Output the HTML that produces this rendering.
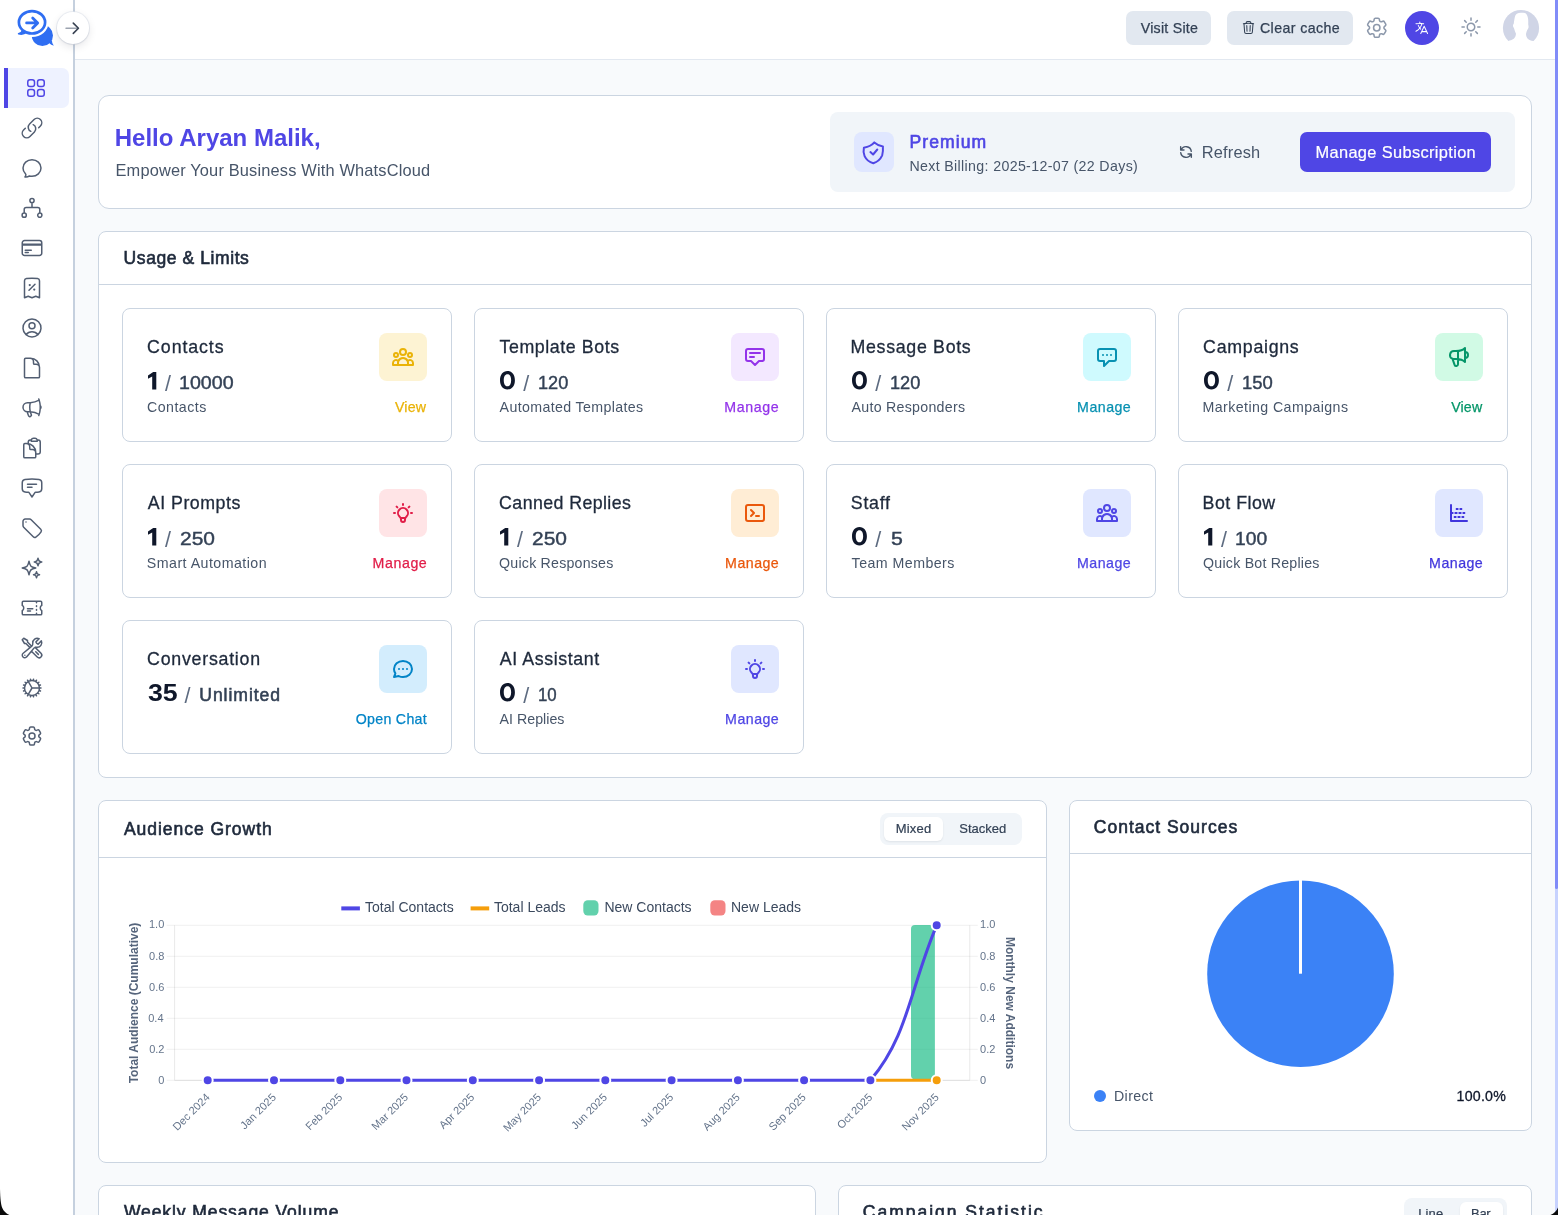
<!DOCTYPE html><html><head><meta charset="utf-8"><title>Dashboard</title><style>html,body{margin:0;padding:0}body{width:1558px;height:1215px;overflow:hidden;background:#f8fafc;font-family:"Liberation Sans", sans-serif;position:relative}
.a{position:absolute;box-sizing:border-box}.t{white-space:nowrap}svg{overflow:visible}</style></head><body><div id="root" class="a" style="left:0;top:0;width:1558px;height:1215px;will-change:transform">
<div class="a" style="left:0px;top:0px;width:73px;height:1215px;background:#fff;"></div>
<div class="a" style="left:73px;top:0px;width:2px;height:1215px;background:#c5d0de;"></div>
<div class="a" style="left:75px;top:0px;width:1483px;height:59px;background:#fff;"></div>
<div class="a" style="left:75px;top:59px;width:1483px;height:1px;background:#e2e8f0;"></div>
<svg class="a" style="left:14px;top:6px" width="44" height="44" viewBox="0 0 44 44">
<circle cx="28.4" cy="29.4" r="10.6" fill="#2f6ef2"/>
<path d="M34.5 36 C36.5 38.6 38.2 39.4 40 39.6 C38.6 38 38 36.4 38 34.4 Z" fill="#2f6ef2"/>
<ellipse cx="18" cy="16.3" rx="13.1" ry="11.2" fill="#fff" stroke="#fff" stroke-width="7"/>
<path d="M9.2 23.6 C8.4 25.8 6.8 27.2 4.6 27.8 C7.6 28.6 10.6 27.8 12.6 26.2" fill="#2f6ef2" stroke="#2f6ef2" stroke-width="1.6" stroke-linejoin="round"/>
<ellipse cx="18" cy="16.3" rx="13.1" ry="11.2" fill="#fff" stroke="#2f6ef2" stroke-width="2.7"/>
<path d="M12.6 16.9 H23.2 M18.7 11.9 L23.7 16.9 L18.7 21.9" fill="none" stroke="#2f6ef2" stroke-width="2.8" stroke-linecap="round" stroke-linejoin="round"/>
</svg>
<div class="a" style="left:57.2px;top:12px;width:31.6px;height:31.6px;background:#fff;border-radius:50%;box-shadow:0 3px 8px rgba(15,23,42,0.10),0 1px 2px rgba(15,23,42,0.05),0 0 0 1px rgba(226,232,240,0.6);"></div>
<svg class="a" style="left:64.3px;top:19.75px" width="16.5" height="16.5" viewBox="0 0 24 24" fill="none" stroke-width="2.3" stroke-linecap="round" stroke-linejoin="round"><path d="M3 12H20" stroke="#9ca3af"/><path d="M13.5 4.5 21 12l-7.5 7.5" stroke="#374151"/></svg>
<div class="a" style="left:4px;top:68px;width:65px;height:40px;background:#eef2ff;border-radius:0 7px 7px 0;"></div>
<div class="a" style="left:4px;top:68px;width:4px;height:40px;background:#4f46e5;"></div>
<svg class="a" style="left:24.0px;top:76.0px;" width="24" height="24" viewBox="0 0 24 24" fill="none" stroke="#4f46e5" stroke-width="1.5" stroke-linecap="round" stroke-linejoin="round"><path d="M3.75 6A2.25 2.25 0 0 1 6 3.75h2.25A2.25 2.25 0 0 1 10.5 6v2.25a2.25 2.25 0 0 1-2.25 2.25H6a2.25 2.25 0 0 1-2.25-2.25V6ZM3.75 15.75A2.25 2.25 0 0 1 6 13.5h2.25a2.25 2.25 0 0 1 2.25 2.25V18a2.25 2.25 0 0 1-2.25 2.25H6A2.25 2.25 0 0 1 3.75 18v-2.25ZM13.5 6a2.25 2.25 0 0 1 2.25-2.25H18A2.25 2.25 0 0 1 20.25 6v2.25A2.25 2.25 0 0 1 18 10.5h-2.25a2.25 2.25 0 0 1-2.25-2.25V6ZM13.5 15.75a2.25 2.25 0 0 1 2.25-2.25H18a2.25 2.25 0 0 1 2.25 2.25V18A2.25 2.25 0 0 1 18 20.25h-2.25A2.25 2.25 0 0 1 13.5 18v-2.25Z"/></svg>
<svg class="a" style="left:20.0px;top:116.0px;" width="24" height="24" viewBox="0 0 24 24" fill="none" stroke="#525e72" stroke-width="1.5" stroke-linecap="round" stroke-linejoin="round"><path d="M13.19 8.688a4.5 4.5 0 0 1 1.242 7.244l-4.5 4.5a4.5 4.5 0 0 1-6.364-6.364l1.757-1.757m13.35-.622 1.757-1.757a4.5 4.5 0 0 0-6.364-6.364l-4.5 4.5a4.5 4.5 0 0 0 1.242 7.244"/></svg>
<svg class="a" style="left:20.0px;top:156.0px;" width="24" height="24" viewBox="0 0 24 24" fill="none" stroke="#525e72" stroke-width="1.5" stroke-linecap="round" stroke-linejoin="round"><path d="M12 20.25c4.97 0 9-3.694 9-8.25s-4.03-8.25-9-8.25S3 7.444 3 12c0 2.104.859 4.023 2.273 5.48.432.447.74 1.04.586 1.641a4.483 4.483 0 0 1-.923 1.785A5.969 5.969 0 0 0 6 21c1.282 0 2.47-.402 3.445-1.087.81.22 1.668.337 2.555.337Z"/></svg>
<svg class="a" style="left:20.0px;top:196.0px;" width="24" height="24" viewBox="0 0 24 24" fill="none" stroke="#525e72" stroke-width="1.5" stroke-linecap="round" stroke-linejoin="round"><path d="M12 6.7v4.9M4.2 17.1v-3.5a2 2 0 0 1 2-2h11.6a2 2 0 0 1 2 2v3.5M14.1 4.6a2.1 2.1 0 1 1-4.2 0 2.1 2.1 0 0 1 4.2 0ZM6.3 19.2a2.1 2.1 0 1 1-4.2 0 2.1 2.1 0 0 1 4.2 0ZM21.9 19.2a2.1 2.1 0 1 1-4.2 0 2.1 2.1 0 0 1 4.2 0Z"/></svg>
<svg class="a" style="left:20.0px;top:236.0px;" width="24" height="24" viewBox="0 0 24 24" fill="none" stroke="#525e72" stroke-width="1.5" stroke-linecap="round" stroke-linejoin="round"><path d="M2.25 8.25h19.5M2.25 9h19.5m-16.5 5.25h6m-6 2.25h3m-3.75 3h15a2.25 2.25 0 0 0 2.25-2.25V6.75A2.25 2.25 0 0 0 19.5 4.5h-15a2.25 2.25 0 0 0-2.25 2.25v10.5A2.25 2.25 0 0 0 4.5 19.5Z"/></svg>
<svg class="a" style="left:20.0px;top:276.0px;" width="24" height="24" viewBox="0 0 24 24" fill="none" stroke="#525e72" stroke-width="1.5" stroke-linecap="round" stroke-linejoin="round"><path d="m9 14.25 6-6m4.5-3.493V21.75l-3.75-1.5-3.75 1.5-3.75-1.5-3.75 1.5V4.757c0-1.108.806-2.057 1.907-2.185a48.507 48.507 0 0 1 11.186 0c1.1.128 1.907 1.077 1.907 2.185ZM9.75 9h.008v.008H9.75V9Zm.375 0a.375.375 0 1 1-.75 0 .375.375 0 0 1 .75 0Zm4.125 4.5h.008v.008h-.008V13.5Zm.375 0a.375.375 0 1 1-.75 0 .375.375 0 0 1 .75 0Z"/></svg>
<svg class="a" style="left:20.0px;top:316.0px;" width="24" height="24" viewBox="0 0 24 24" fill="none" stroke="#525e72" stroke-width="1.5" stroke-linecap="round" stroke-linejoin="round"><path d="M17.982 18.725A7.488 7.488 0 0 0 12 15.75a7.488 7.488 0 0 0-5.982 2.975m11.963 0a9 9 0 1 0-11.963 0m11.963 0A8.966 8.966 0 0 1 12 21a8.966 8.966 0 0 1-5.982-2.275M15 9.75a3 3 0 1 1-6 0 3 3 0 0 1 6 0Z"/></svg>
<svg class="a" style="left:20.0px;top:356.0px;" width="24" height="24" viewBox="0 0 24 24" fill="none" stroke="#525e72" stroke-width="1.5" stroke-linecap="round" stroke-linejoin="round"><path d="M19.5 14.25v-2.625a3.375 3.375 0 0 0-3.375-3.375h-1.5A1.125 1.125 0 0 1 13.5 7.125v-1.5a3.375 3.375 0 0 0-3.375-3.375H8.25m2.25 0H5.625c-.621 0-1.125.504-1.125 1.125v17.25c0 .621.504 1.125 1.125 1.125h12.75c.621 0 1.125-.504 1.125-1.125V11.25a9 9 0 0 0-9-9Z"/></svg>
<svg class="a" style="left:20.0px;top:396.0px;" width="24" height="24" viewBox="0 0 24 24" fill="none" stroke="#525e72" stroke-width="1.5" stroke-linecap="round" stroke-linejoin="round"><path d="M10.34 15.84c-.688-.06-1.386-.09-2.09-.09H7.5a4.5 4.5 0 1 1 0-9h.75c.704 0 1.402-.03 2.09-.09m0 9.18c.253.962.584 1.892.985 2.783.247.55.06 1.21-.463 1.511l-.657.38c-.551.318-1.26.117-1.527-.461a20.845 20.845 0 0 1-1.44-4.282m3.102.069a18.03 18.03 0 0 1-.59-4.59c0-1.586.205-3.124.59-4.59m0 9.18a23.848 23.848 0 0 1 8.835 2.535M10.34 6.66a23.847 23.847 0 0 0 8.835-2.535m0 0A23.74 23.74 0 0 0 18.795 3m.38 1.125a23.91 23.91 0 0 1 1.014 5.395m-1.014 8.855c-.118.38-.245.754-.38 1.125m.38-1.125a23.91 23.91 0 0 0 1.014-5.395m0-3.46c.495.413.811 1.035.811 1.73 0 .695-.316 1.317-.811 1.73m0-3.46a24.347 24.347 0 0 1 0 3.46"/></svg>
<svg class="a" style="left:20.0px;top:436.0px;" width="24" height="24" viewBox="0 0 24 24" fill="none" stroke="#525e72" stroke-width="1.5" stroke-linecap="round" stroke-linejoin="round"><path d="M8.25 7.5V6.108c0-1.135.845-2.098 1.976-2.192.373-.03.748-.057 1.123-.08M15.75 18H18a2.25 2.25 0 0 0 2.25-2.25V6.108c0-1.135-.845-2.098-1.976-2.192a48.424 48.424 0 0 0-1.123-.08M15.75 18.75v-1.875a3.375 3.375 0 0 0-3.375-3.375h-1.5a1.125 1.125 0 0 1-1.125-1.125v-1.5A3.375 3.375 0 0 0 6.375 7.5H5.25m11.9-3.664A2.251 2.251 0 0 0 15 2.25h-1.5a2.251 2.251 0 0 0-2.15 1.586m5.8 0c.065.21.1.433.1.664v.75h-6V4.5c0-.231.035-.454.1-.664M6.75 7.5H4.875c-.621 0-1.125.504-1.125 1.125v12c0 .621.504 1.125 1.125 1.125h9.75c.621 0 1.125-.504 1.125-1.125V16.5a9 9 0 0 0-9-9Z"/></svg>
<svg class="a" style="left:20.0px;top:476.0px;" width="24" height="24" viewBox="0 0 24 24" fill="none" stroke="#525e72" stroke-width="1.5" stroke-linecap="round" stroke-linejoin="round"><path d="M7.5 8.25h9m-9 3H12m-9.75 1.51c0 1.6 1.123 2.994 2.707 3.227 1.129.166 2.27.293 3.423.379.35.026.67.21.865.501L12 21l2.755-4.133a1.14 1.14 0 0 1 .865-.501 48.172 48.172 0 0 0 3.423-.379c1.584-.233 2.707-1.626 2.707-3.228V6.741c0-1.602-1.123-2.995-2.707-3.228A48.394 48.394 0 0 0 12 3c-2.392 0-4.744.175-7.043.513C3.373 3.746 2.25 5.14 2.25 6.741v6.018Z"/></svg>
<svg class="a" style="left:20.0px;top:516.0px;" width="24" height="24" viewBox="0 0 24 24" fill="none" stroke="#525e72" stroke-width="1.5" stroke-linecap="round" stroke-linejoin="round"><path d="M9.568 3H5.25A2.25 2.25 0 0 0 3 5.25v4.318c0 .597.237 1.17.659 1.591l9.581 9.581c.699.699 1.78.872 2.607.33a18.095 18.095 0 0 0 5.223-5.223c.542-.827.369-1.908-.33-2.607L11.16 3.66A2.25 2.25 0 0 0 9.568 3ZM6 6h.008v.008H6V6Z"/></svg>
<svg class="a" style="left:20.0px;top:556.0px;" width="24" height="24" viewBox="0 0 24 24" fill="none" stroke="#525e72" stroke-width="1.5" stroke-linecap="round" stroke-linejoin="round"><path d="M9.813 15.904 9 18.75l-.813-2.846a4.5 4.5 0 0 0-3.09-3.09L2.25 12l2.846-.813a4.5 4.5 0 0 0 3.09-3.09L9 5.25l.813 2.846a4.5 4.5 0 0 0 3.09 3.09L15.75 12l-2.846.813a4.5 4.5 0 0 0-3.09 3.09ZM18.259 8.715 18 9.75l-.259-1.035a3.375 3.375 0 0 0-2.455-2.456L14.25 6l1.036-.259a3.375 3.375 0 0 0 2.455-2.456L18 2.25l.259 1.035a3.375 3.375 0 0 0 2.456 2.456L21.75 6l-1.035.259a3.375 3.375 0 0 0-2.456 2.456ZM16.894 20.567 16.5 21.75l-.394-1.183a2.25 2.25 0 0 0-1.423-1.423L13.5 18.75l1.183-.394a2.25 2.25 0 0 0 1.423-1.423l.394-1.183.394 1.183a2.25 2.25 0 0 0 1.423 1.423l1.183.394-1.183.394a2.25 2.25 0 0 0-1.423 1.423Z"/></svg>
<svg class="a" style="left:20.0px;top:596.0px;" width="24" height="24" viewBox="0 0 24 24" fill="none" stroke="#525e72" stroke-width="1.5" stroke-linecap="round" stroke-linejoin="round"><path d="M16.5 6v.75m0 3v.75m0 3v.75m0 3V18m-9-5.25h5.25M7.5 15h3M3.375 5.25c-.621 0-1.125.504-1.125 1.125v3.026a2.999 2.999 0 0 1 0 5.198v3.026c0 .621.504 1.125 1.125 1.125h17.25c.621 0 1.125-.504 1.125-1.125v-3.026a2.999 2.999 0 0 1 0-5.198V6.375c0-.621-.504-1.125-1.125-1.125H3.375Z"/></svg>
<svg class="a" style="left:20.0px;top:636.0px;" width="24" height="24" viewBox="0 0 24 24" fill="none" stroke="#525e72" stroke-width="1.5" stroke-linecap="round" stroke-linejoin="round"><path d="M11.42 15.17 17.25 21A2.652 2.652 0 0 0 21 17.25l-5.877-5.877M11.42 15.17l2.496-3.03c.317-.384.74-.626 1.208-.766M11.42 15.17l-4.655 5.653a2.548 2.548 0 1 1-3.586-3.586l6.837-5.63m5.108-.233c.55-.164 1.163-.188 1.743-.14a4.5 4.5 0 0 0 4.486-6.336l-3.276 3.277a3.004 3.004 0 0 1-2.25-2.25l3.276-3.276a4.5 4.5 0 0 0-6.336 4.486c.091 1.076-.071 2.264-.904 2.95l-.102.085m-1.745 1.437L5.909 7.5H4.5L2.25 3.75l1.5-1.5L7.5 4.5v1.409l4.26 4.26m-1.745 1.437 1.745-1.437m6.615 8.206L15.75 15.75M4.867 19.125h.008v.008h-.008v-.008Z"/></svg>
<svg class="a" style="left:20.0px;top:676.0px;" width="24" height="24" viewBox="0 0 24 24" fill="none" stroke="#525e72" stroke-width="1.5" stroke-linecap="round" stroke-linejoin="round"><path d="M4.5 12a7.5 7.5 0 0 0 15 0m-15 0a7.5 7.5 0 1 1 15 0m-15 0H3m16.5 0H21m-1.5 0H12m-8.457 3.077 1.41-.513m14.095-5.13 1.41-.513M5.106 17.785l1.15-.964m11.49-9.642 1.149-.964M7.501 19.795l.75-1.3m7.5-12.99.75-1.3m-6.063 16.658.26-1.477m2.605-14.772.26-1.477m0 17.726-.26-1.477M10.698 4.614l-.26-1.477M16.5 19.794l-.75-1.299M7.5 4.205 12 12m6.894 5.785-1.149-.964M6.256 7.178l-1.15-.964m15.352 8.864-1.41-.513M4.954 9.435l-1.41-.514M12.002 12l-3.75 6.495"/></svg>
<svg class="a" style="left:20.0px;top:724.0px;" width="24" height="24" viewBox="0 0 24 24" fill="none" stroke="#525e72" stroke-width="1.5" stroke-linecap="round" stroke-linejoin="round"><path d="M9.594 3.94c.09-.542.56-.94 1.11-.94h2.593c.55 0 1.02.398 1.11.94l.213 1.281c.063.374.313.686.645.87.074.04.147.083.22.127.325.196.72.257 1.075.124l1.217-.456a1.125 1.125 0 0 1 1.37.49l1.296 2.247a1.125 1.125 0 0 1-.26 1.431l-1.003.827c-.293.241-.438.613-.43.992a7.723 7.723 0 0 1 0 .255c-.008.378.137.75.43.991l1.004.827c.424.35.534.955.26 1.43l-1.298 2.247a1.125 1.125 0 0 1-1.369.491l-1.217-.456c-.355-.133-.75-.072-1.076.124a6.47 6.47 0 0 1-.22.128c-.331.183-.581.495-.644.869l-.213 1.281c-.09.543-.56.94-1.11.94h-2.594c-.55 0-1.019-.398-1.11-.94l-.213-1.281c-.062-.374-.312-.686-.644-.87a6.52 6.52 0 0 1-.22-.127c-.325-.196-.72-.257-1.076-.124l-1.217.456a1.125 1.125 0 0 1-1.369-.49l-1.297-2.247a1.125 1.125 0 0 1 .26-1.431l1.004-.827c.292-.24.437-.613.43-.991a6.932 6.932 0 0 1 0-.255c.007-.38-.138-.751-.43-.992l-1.004-.827a1.125 1.125 0 0 1-.26-1.43l1.297-2.247a1.125 1.125 0 0 1 1.37-.491l1.216.456c.356.133.751.072 1.076-.124.072-.044.146-.086.22-.128.332-.183.582-.495.644-.869l.214-1.28ZM15 12a3 3 0 1 1-6 0 3 3 0 0 1 6 0Z"/></svg>
<div class="a" style="left:1126px;top:11px;width:85px;height:34px;background:#e2e8f0;border-radius:7px;"></div>
<span class="a t" style="top:20px;font-size:14.2px;line-height:16px;color:#334155;letter-spacing:0.250px;-webkit-text-stroke:0.25px #334155;left:1140.72px;">Visit Site</span>
<div class="a" style="left:1227px;top:11px;width:126px;height:34px;background:#e2e8f0;border-radius:7px;"></div>
<svg class="a" style="left:1240.5px;top:20.4px;" width="15" height="15" viewBox="0 0 24 24" fill="none" stroke="#334155" stroke-width="1.65" stroke-linecap="round" stroke-linejoin="round"><path d="m14.74 9-.346 9m-4.788 0L9.26 9m9.968-3.21c.342.052.682.107 1.022.166m-1.022-.165L18.16 19.673a2.25 2.25 0 0 1-2.244 2.077H8.084a2.25 2.25 0 0 1-2.244-2.077L4.772 5.79m14.456 0a48.108 48.108 0 0 0-3.478-.397m-12 .562c.34-.059.68-.114 1.022-.165m0 0a48.11 48.11 0 0 1 3.478-.397m7.5 0v-.916c0-1.18-.91-2.164-2.09-2.201a51.964 51.964 0 0 0-3.32 0c-1.18.037-2.09 1.022-2.09 2.201v.916m7.5 0a48.667 48.667 0 0 0-7.5 0"/></svg>
<span class="a t" style="top:20px;font-size:14.2px;line-height:16px;color:#334155;letter-spacing:0.402px;-webkit-text-stroke:0.25px #334155;left:1259.94px;">Clear cache</span>
<svg class="a" style="left:1364.25px;top:15.05px;" width="25.5" height="25.5" viewBox="0 0 24 24" fill="none" stroke="#8c98ab" stroke-width="1.45" stroke-linecap="round" stroke-linejoin="round"><path d="M9.594 3.94c.09-.542.56-.94 1.11-.94h2.593c.55 0 1.02.398 1.11.94l.213 1.281c.063.374.313.686.645.87.074.04.147.083.22.127.325.196.72.257 1.075.124l1.217-.456a1.125 1.125 0 0 1 1.37.49l1.296 2.247a1.125 1.125 0 0 1-.26 1.431l-1.003.827c-.293.241-.438.613-.43.992a7.723 7.723 0 0 1 0 .255c-.008.378.137.75.43.991l1.004.827c.424.35.534.955.26 1.43l-1.298 2.247a1.125 1.125 0 0 1-1.369.491l-1.217-.456c-.355-.133-.75-.072-1.076.124a6.47 6.47 0 0 1-.22.128c-.331.183-.581.495-.644.869l-.213 1.281c-.09.543-.56.94-1.11.94h-2.594c-.55 0-1.019-.398-1.11-.94l-.213-1.281c-.062-.374-.312-.686-.644-.87a6.52 6.52 0 0 1-.22-.127c-.325-.196-.72-.257-1.076-.124l-1.217.456a1.125 1.125 0 0 1-1.369-.49l-1.297-2.247a1.125 1.125 0 0 1 .26-1.431l1.004-.827c.292-.24.437-.613.43-.991a6.932 6.932 0 0 1 0-.255c.007-.38-.138-.751-.43-.992l-1.004-.827a1.125 1.125 0 0 1-.26-1.43l1.297-2.247a1.125 1.125 0 0 1 1.37-.491l1.216.456c.356.133.751.072 1.076-.124.072-.044.146-.086.22-.128.332-.183.582-.495.644-.869l.214-1.28ZM15 12a3 3 0 1 1-6 0 3 3 0 0 1 6 0Z"/></svg>
<div class="a" style="left:1405px;top:11px;width:34px;height:34px;background:#4f46e5;border-radius:50%;"></div>
<svg class="a" style="left:1414.05px;top:20.45px;" width="15.5" height="15.5" viewBox="0 0 24 24" fill="none" stroke="#fff" stroke-width="1.55" stroke-linecap="round" stroke-linejoin="round"><path d="m10.5 21 5.25-11.25L21 21m-9-3h7.5M3 5.621a48.474 48.474 0 0 1 6-.371m0 0c1.12 0 2.233.038 3.334.114M9 5.25V3m3.334 2.364C11.176 10.658 7.69 15.08 3 17.502m9.334-12.138c.896.061 1.785.147 2.666.257m-4.589 8.495a18.023 18.023 0 0 1-3.827-5.802"/></svg>
<svg class="a" style="left:1458.8px;top:15.0px;" width="24" height="24" viewBox="0 0 24 24" fill="none" stroke="#8c98ab" stroke-width="1.5" stroke-linecap="round" stroke-linejoin="round"><path d="M12 3v2.25m6.364.386-1.591 1.591M21 12h-2.25m-.386 6.364-1.591-1.591M12 18.75V21m-4.773-4.227-1.591 1.591M5.25 12H3m4.227-4.773L5.636 5.636M15.75 12a3.75 3.75 0 1 1-7.5 0 3.75 3.75 0 0 1 7.5 0Z"/></svg>
<svg class="a" style="left:1503px;top:9.8px" width="36" height="40" viewBox="0 0 36 40">
<circle cx="18" cy="18" r="18.1" fill="#d0d5e6"/>
<path d="M18 2.7 C14.5 2.7 12.4 4.4 12 6.5 C11.4 9 11 11.5 10.8 13.4 C10 14.5 9.8 15.5 10 16.2 C10.4 17.2 10.8 17.8 11.1 18.5 C11.6 20.5 12.2 22 13 23.7 C12.8 26 12 27.6 10.8 28.8 C9 30 7 30.6 5.3 31 L-2 33 V40 H38 V33 L30.1 31 C28 30.6 26 29.8 24.5 28.4 C23.4 27 23 25.6 23 24.1 C23.3 22.6 23.6 21.4 24.1 20.3 C24.8 19.4 25.4 18.4 25.6 17.3 C25.6 16.2 25.4 15.2 25.2 14.3 C25.3 12 25.3 10 25 8.3 C24.6 5.6 23.6 4 22 3.1 C20.8 2.9 19.4 2.7 18 2.7 Z" fill="#fff"/></svg>
<div class="a" style="left:1555px;top:0px;width:3px;height:1215px;background:#c7d2fe;"></div>
<div class="a" style="left:1555px;top:0px;width:3px;height:889px;background:#818cf8;border-radius:0 0 2px 2px;"></div>
<div class="a" style="left:98px;top:95px;width:1434px;height:114px;background:#fff;border:1px solid #cbd5e1;border-radius:11px;"></div>
<span class="a t" style="top:124px;font-size:24px;line-height:27px;font-weight:700;color:#4f46e5;left:114.78px;">Hello Aryan Malik,</span>
<span class="a t" style="top:161px;font-size:16.4px;line-height:18px;color:#475569;letter-spacing:0.162px;left:115.48px;">Empower Your Business With WhatsCloud</span>
<div class="a" style="left:830px;top:112px;width:685px;height:80px;background:#f1f5f9;border-radius:8px;"></div>
<div class="a" style="left:854px;top:132px;width:40px;height:40px;background:#e0e7ff;border-radius:8px;"></div>
<svg class="a" style="left:854px;top:132px" width="40" height="40" viewBox="854 132 40 40" fill="none" stroke="#4f46e5" stroke-width="2" stroke-linecap="round" stroke-linejoin="round"><path d="M874.3 142.4 C872.8 144.2 870 146.6 863.9 147.8 C863.2 151 863.6 154 864.6 156.2 C866.2 159.6 869.2 162.2 873.3 163.2 C877.6 161.8 880.6 158.8 882.2 155.3 C883 152.8 883.1 149.6 882.9 146.4 C880.6 146.2 877.4 145 874.3 142.4 Z M870.4 152.1 L873.1 154.5 L877.3 149.5"/></svg>
<span class="a t" style="top:132px;font-size:17.6px;line-height:20px;color:#4f46e5;letter-spacing:1.040px;-webkit-text-stroke:0.62px #4f46e5;left:909.58px;">Premium</span>
<span class="a t" style="top:158px;font-size:14.2px;line-height:16px;color:#475569;letter-spacing:0.350px;left:909.41px;">Next Billing: 2025-12-07 (22 Days)</span>
<svg class="a" style="left:1178.0px;top:143.7px;" width="16" height="16" viewBox="0 0 24 24" fill="none" stroke="#475569" stroke-width="2.1" stroke-linecap="round" stroke-linejoin="round"><path d="M4 4v5h.582m15.356 2A8.001 8.001 0 004.582 9m0 0H9m11 11v-5h-.581m0 0a8.003 8.003 0 01-15.357-2m15.357 2H15"/></svg>
<span class="a t" style="top:143px;font-size:16.4px;line-height:18px;color:#475569;letter-spacing:0.197px;left:1201.66px;">Refresh</span>
<div class="a" style="left:1300px;top:132px;width:191px;height:40px;background:#4f46e5;border-radius:7px;"></div>
<span class="a t" style="top:143px;font-size:16.4px;line-height:18px;color:#fff;letter-spacing:0.349px;-webkit-text-stroke:0.2px #fff;left:1315.47px;">Manage Subscription</span>
<div class="a" style="left:98px;top:231px;width:1434px;height:547px;background:#fff;border:1px solid #cbd5e1;border-radius:8px;"></div>
<div class="a" style="left:99px;top:284px;width:1432px;height:1px;background:#cbd5e1;"></div>
<span class="a t" style="top:248px;font-size:17.5px;line-height:20px;color:#1e293b;letter-spacing:0.580px;-webkit-text-stroke:0.62px #1e293b;left:123.62px;">Usage &amp; Limits</span>
<div class="a" style="left:122px;top:308px;width:330px;height:134px;background:#fff;border:1px solid #cbd5e1;border-radius:8px;"></div>
<span class="a t" style="top:337px;font-size:17.8px;line-height:20px;color:#1e293b;letter-spacing:0.897px;-webkit-text-stroke:0.3px #1e293b;left:147.11px;">Contacts</span>
<svg class="a" style="left:147.9px;top:371.6px" width="9" height="18" viewBox="0 0 9 18"><path d="M8.3 0V17.4H4.2V4.4L0 6.8V3.4L5.2 0Z" fill="#0f172a"/></svg>
<span class="a t" style="top:372px;font-size:21.5px;line-height:24px;color:#5d6b80;left:165.00px;">/</span>
<span class="a t" style="top:373px;font-size:18px;line-height:20px;color:#334155;-webkit-text-stroke:0.4px #334155;left:179.00px;transform-origin:0 50%;transform:scaleX(1.090010262048219);">10000</span>
<span class="a t" style="top:399px;font-size:14.2px;line-height:16px;color:#475569;letter-spacing:0.477px;left:146.99px;">Contacts</span>
<span class="a t" style="top:399px;font-size:14.2px;line-height:16px;color:#eab308;letter-spacing:0.234px;-webkit-text-stroke:0.25px #eab308;left:394.93px;">View</span>
<div class="a" style="left:379px;top:333px;width:48px;height:48px;background:#fdf3d3;border-radius:8px;"></div>
<svg class="a" style="left:391.0px;top:345.0px;" width="24" height="24" viewBox="0 0 24 24" fill="none" stroke="#eab308" stroke-width="2" stroke-linecap="round" stroke-linejoin="round"><path d="M17 20h5v-2a3 3 0 00-5.356-1.857M17 20H7m10 0v-2c0-.656-.126-1.283-.356-1.857M7 20H2v-2a3 3 0 015.356-1.857M7 20v-2c0-.656.126-1.283.356-1.857m0 0a5.002 5.002 0 019.288 0M15 7a3 3 0 11-6 0 3 3 0 016 0zm6 3a2 2 0 11-4 0 2 2 0 014 0zM7 10a2 2 0 11-4 0 2 2 0 014 0z"/></svg>
<div class="a" style="left:474px;top:308px;width:330px;height:134px;background:#fff;border:1px solid #cbd5e1;border-radius:8px;"></div>
<span class="a t" style="top:337px;font-size:17.8px;line-height:20px;color:#1e293b;letter-spacing:0.574px;-webkit-text-stroke:0.3px #1e293b;left:499.55px;">Template Bots</span>
<svg class="a" style="left:499.7px;top:371px" width="15" height="19" viewBox="0 0 15 19"><path fill-rule="evenodd" fill="#0f172a" d="M7.45 0C12 0 14.9 3.7 14.9 9.25S12 18.5 7.45 18.5 0 14.8 0 9.25 2.9 0 7.45 0ZM7.45 3.2C5.1 3.2 3.75 5.5 3.75 9.25s1.35 6.05 3.7 6.05 3.7-2.3 3.7-6.05S9.8 3.2 7.45 3.2Z"/></svg>
<span class="a t" style="top:372px;font-size:21.5px;line-height:24px;color:#5d6b80;left:523.22px;">/</span>
<span class="a t" style="top:373px;font-size:18px;line-height:20px;color:#334155;-webkit-text-stroke:0.4px #334155;left:537.60px;transform-origin:0 50%;transform:scaleX(1.0074014558646098);">120</span>
<span class="a t" style="top:399px;font-size:14.2px;line-height:16px;color:#475569;letter-spacing:0.362px;left:499.60px;">Automated Templates</span>
<span class="a t" style="top:399px;font-size:14.2px;line-height:16px;color:#9333ea;letter-spacing:0.655px;-webkit-text-stroke:0.25px #9333ea;left:724.22px;">Manage</span>
<div class="a" style="left:731px;top:333px;width:48px;height:48px;background:#f3e8ff;border-radius:8px;"></div>
<svg class="a" style="left:743.0px;top:345.0px;" width="24" height="24" viewBox="0 0 24 24" fill="none" stroke="#9333ea" stroke-width="2" stroke-linecap="round" stroke-linejoin="round"><path d="M7 8h10M7 12h4m1 8l-4-4H5a2 2 0 01-2-2V6a2 2 0 012-2h14a2 2 0 012 2v8a2 2 0 01-2 2h-3l-4 4z"/></svg>
<div class="a" style="left:826px;top:308px;width:330px;height:134px;background:#fff;border:1px solid #cbd5e1;border-radius:8px;"></div>
<span class="a t" style="top:337px;font-size:17.8px;line-height:20px;color:#1e293b;letter-spacing:0.683px;-webkit-text-stroke:0.3px #1e293b;left:850.55px;">Message Bots</span>
<svg class="a" style="left:851.7px;top:371px" width="15" height="19" viewBox="0 0 15 19"><path fill-rule="evenodd" fill="#0f172a" d="M7.45 0C12 0 14.9 3.7 14.9 9.25S12 18.5 7.45 18.5 0 14.8 0 9.25 2.9 0 7.45 0ZM7.45 3.2C5.1 3.2 3.75 5.5 3.75 9.25s1.35 6.05 3.7 6.05 3.7-2.3 3.7-6.05S9.8 3.2 7.45 3.2Z"/></svg>
<span class="a t" style="top:372px;font-size:21.5px;line-height:24px;color:#5d6b80;left:875.22px;">/</span>
<span class="a t" style="top:373px;font-size:18px;line-height:20px;color:#334155;-webkit-text-stroke:0.4px #334155;left:889.60px;transform-origin:0 50%;transform:scaleX(1.0112073047958101);">120</span>
<span class="a t" style="top:399px;font-size:14.2px;line-height:16px;color:#475569;letter-spacing:0.271px;left:851.60px;">Auto Responders</span>
<span class="a t" style="top:399px;font-size:14.2px;line-height:16px;color:#0891b2;letter-spacing:0.473px;-webkit-text-stroke:0.25px #0891b2;left:1077.12px;">Manage</span>
<div class="a" style="left:1083px;top:333px;width:48px;height:48px;background:#cffafe;border-radius:8px;"></div>
<svg class="a" style="left:1095.0px;top:345.0px;" width="24" height="24" viewBox="0 0 24 24" fill="none" stroke="#0891b2" stroke-width="2" stroke-linecap="round" stroke-linejoin="round"><path d="M8 10h.01M12 10h.01M16 10h.01M9 16H5a2 2 0 01-2-2V6a2 2 0 012-2h14a2 2 0 012 2v8a2 2 0 01-2 2h-5l-5 5v-5z"/></svg>
<div class="a" style="left:1178px;top:308px;width:330px;height:134px;background:#fff;border:1px solid #cbd5e1;border-radius:8px;"></div>
<span class="a t" style="top:337px;font-size:17.8px;line-height:20px;color:#1e293b;letter-spacing:0.711px;-webkit-text-stroke:0.3px #1e293b;left:1203.11px;">Campaigns</span>
<svg class="a" style="left:1203.7px;top:371px" width="15" height="19" viewBox="0 0 15 19"><path fill-rule="evenodd" fill="#0f172a" d="M7.45 0C12 0 14.9 3.7 14.9 9.25S12 18.5 7.45 18.5 0 14.8 0 9.25 2.9 0 7.45 0ZM7.45 3.2C5.1 3.2 3.75 5.5 3.75 9.25s1.35 6.05 3.7 6.05 3.7-2.3 3.7-6.05S9.8 3.2 7.45 3.2Z"/></svg>
<span class="a t" style="top:372px;font-size:21.5px;line-height:24px;color:#5d6b80;left:1227.22px;">/</span>
<span class="a t" style="top:373px;font-size:18px;line-height:20px;color:#334155;-webkit-text-stroke:0.4px #334155;left:1241.60px;transform-origin:0 50%;transform:scaleX(1.0256049356659402);">150</span>
<span class="a t" style="top:399px;font-size:14.2px;line-height:16px;color:#475569;letter-spacing:0.413px;left:1202.59px;">Marketing Campaigns</span>
<span class="a t" style="top:399px;font-size:14.2px;line-height:16px;color:#059669;letter-spacing:0.168px;-webkit-text-stroke:0.25px #059669;left:1451.13px;">View</span>
<div class="a" style="left:1435px;top:333px;width:48px;height:48px;background:#d1fae5;border-radius:8px;"></div>
<svg class="a" style="left:1447.0px;top:345.0px;" width="24" height="24" viewBox="0 0 24 24" fill="none" stroke="#059669" stroke-width="2" stroke-linecap="round" stroke-linejoin="round"><path d="M11 5.882V19.24a1.76 1.76 0 01-3.417.592l-2.147-6.15M18 13a3 3 0 100-6M5.436 13.683A4.001 4.001 0 017 6h1.832c4.1 0 7.625-1.234 9.168-3v14c-1.543-1.766-5.067-3-9.168-3H7a3.988 3.988 0 01-1.564-.317z"/></svg>
<div class="a" style="left:122px;top:464px;width:330px;height:134px;background:#fff;border:1px solid #cbd5e1;border-radius:8px;"></div>
<span class="a t" style="top:493px;font-size:17.8px;line-height:20px;color:#1e293b;letter-spacing:0.506px;-webkit-text-stroke:0.3px #1e293b;left:147.80px;">AI Prompts</span>
<svg class="a" style="left:147.9px;top:527.6px" width="9" height="18" viewBox="0 0 9 18"><path d="M8.3 0V17.4H4.2V4.4L0 6.8V3.4L5.2 0Z" fill="#0f172a"/></svg>
<span class="a t" style="top:528px;font-size:21.5px;line-height:24px;color:#5d6b80;left:165.00px;">/</span>
<span class="a t" style="top:529px;font-size:18px;line-height:20px;color:#334155;-webkit-text-stroke:0.4px #334155;left:180.00px;transform-origin:0 50%;transform:scaleX(1.1619885747406986);">250</span>
<span class="a t" style="top:555px;font-size:14.2px;line-height:16px;color:#475569;letter-spacing:0.464px;left:146.87px;">Smart Automation</span>
<span class="a t" style="top:555px;font-size:14.2px;line-height:16px;color:#e11d48;letter-spacing:0.575px;-webkit-text-stroke:0.25px #e11d48;left:372.62px;">Manage</span>
<div class="a" style="left:379px;top:489px;width:48px;height:48px;background:#ffe4e6;border-radius:8px;"></div>
<svg class="a" style="left:391.0px;top:501.0px;" width="24" height="24" viewBox="0 0 24 24" fill="none" stroke="#e11d48" stroke-width="2" stroke-linecap="round" stroke-linejoin="round"><path d="M9.663 17h4.673M12 3v1m6.364 1.636l-.707.707M21 12h-1M4 12H3m3.343-5.657l-.707-.707m2.828 9.9a5 5 0 117.072 0l-.548.547A3.374 3.374 0 0014 18.469V19a2 2 0 11-4 0v-.531c0-.895-.356-1.754-.988-2.386l-.548-.547z"/></svg>
<div class="a" style="left:474px;top:464px;width:330px;height:134px;background:#fff;border:1px solid #cbd5e1;border-radius:8px;"></div>
<span class="a t" style="top:493px;font-size:17.8px;line-height:20px;color:#1e293b;letter-spacing:0.404px;-webkit-text-stroke:0.3px #1e293b;left:499.11px;">Canned Replies</span>
<svg class="a" style="left:499.9px;top:527.6px" width="9" height="18" viewBox="0 0 9 18"><path d="M8.3 0V17.4H4.2V4.4L0 6.8V3.4L5.2 0Z" fill="#0f172a"/></svg>
<span class="a t" style="top:528px;font-size:21.5px;line-height:24px;color:#5d6b80;left:517.00px;">/</span>
<span class="a t" style="top:529px;font-size:18px;line-height:20px;color:#334155;-webkit-text-stroke:0.4px #334155;left:532.00px;transform-origin:0 50%;transform:scaleX(1.1619885747406962);">250</span>
<span class="a t" style="top:555px;font-size:14.2px;line-height:16px;color:#475569;letter-spacing:0.216px;left:499.11px;">Quick Responses</span>
<span class="a t" style="top:555px;font-size:14.2px;line-height:16px;color:#ea580c;letter-spacing:0.473px;-webkit-text-stroke:0.25px #ea580c;left:725.12px;">Manage</span>
<div class="a" style="left:731px;top:489px;width:48px;height:48px;background:#ffedd5;border-radius:8px;"></div>
<svg class="a" style="left:743.0px;top:501.0px;" width="24" height="24" viewBox="0 0 24 24" fill="none" stroke="#ea580c" stroke-width="2" stroke-linecap="round" stroke-linejoin="round"><path d="M8 9l3 3-3 3m5 0h3M5 20h14a2 2 0 002-2V6a2 2 0 00-2-2H5a2 2 0 00-2 2v12a2 2 0 002 2z"/></svg>
<div class="a" style="left:826px;top:464px;width:330px;height:134px;background:#fff;border:1px solid #cbd5e1;border-radius:8px;"></div>
<span class="a t" style="top:493px;font-size:17.8px;line-height:20px;color:#1e293b;letter-spacing:0.710px;-webkit-text-stroke:0.3px #1e293b;left:850.84px;">Staff</span>
<svg class="a" style="left:851.7px;top:527px" width="15" height="19" viewBox="0 0 15 19"><path fill-rule="evenodd" fill="#0f172a" d="M7.45 0C12 0 14.9 3.7 14.9 9.25S12 18.5 7.45 18.5 0 14.8 0 9.25 2.9 0 7.45 0ZM7.45 3.2C5.1 3.2 3.75 5.5 3.75 9.25s1.35 6.05 3.7 6.05 3.7-2.3 3.7-6.05S9.8 3.2 7.45 3.2Z"/></svg>
<span class="a t" style="top:528px;font-size:21.5px;line-height:24px;color:#5d6b80;left:875.22px;">/</span>
<span class="a t" style="top:529px;font-size:18px;line-height:20px;color:#334155;-webkit-text-stroke:0.4px #334155;left:890.60px;transform-origin:0 50%;transform:scaleX(1.181181276063099);">5</span>
<span class="a t" style="top:555px;font-size:14.2px;line-height:16px;color:#475569;letter-spacing:0.459px;left:851.59px;">Team Members</span>
<span class="a t" style="top:555px;font-size:14.2px;line-height:16px;color:#4f46e5;letter-spacing:0.495px;-webkit-text-stroke:0.25px #4f46e5;left:1077.02px;">Manage</span>
<div class="a" style="left:1083px;top:489px;width:48px;height:48px;background:#e0e7ff;border-radius:8px;"></div>
<svg class="a" style="left:1095.0px;top:501.0px;" width="24" height="24" viewBox="0 0 24 24" fill="none" stroke="#4f46e5" stroke-width="2" stroke-linecap="round" stroke-linejoin="round"><path d="M17 20h5v-2a3 3 0 00-5.356-1.857M17 20H7m10 0v-2c0-.656-.126-1.283-.356-1.857M7 20H2v-2a3 3 0 015.356-1.857M7 20v-2c0-.656.126-1.283.356-1.857m0 0a5.002 5.002 0 019.288 0M15 7a3 3 0 11-6 0 3 3 0 016 0zm6 3a2 2 0 11-4 0 2 2 0 014 0zM7 10a2 2 0 11-4 0 2 2 0 014 0z"/></svg>
<div class="a" style="left:1178px;top:464px;width:330px;height:134px;background:#fff;border:1px solid #cbd5e1;border-radius:8px;"></div>
<span class="a t" style="top:493px;font-size:17.8px;line-height:20px;color:#1e293b;letter-spacing:0.498px;-webkit-text-stroke:0.3px #1e293b;left:1202.55px;">Bot Flow</span>
<svg class="a" style="left:1203.9px;top:527.6px" width="9" height="18" viewBox="0 0 9 18"><path d="M8.3 0V17.4H4.2V4.4L0 6.8V3.4L5.2 0Z" fill="#0f172a"/></svg>
<span class="a t" style="top:528px;font-size:21.5px;line-height:24px;color:#5d6b80;left:1221.00px;">/</span>
<span class="a t" style="top:529px;font-size:18px;line-height:20px;color:#334155;-webkit-text-stroke:0.4px #334155;left:1235.00px;transform-origin:0 50%;transform:scaleX(1.0689655172413792);">100</span>
<span class="a t" style="top:555px;font-size:14.2px;line-height:16px;color:#475569;letter-spacing:0.220px;left:1203.11px;">Quick Bot Replies</span>
<span class="a t" style="top:555px;font-size:14.2px;line-height:16px;color:#4136dd;letter-spacing:0.473px;-webkit-text-stroke:0.25px #4136dd;left:1429.12px;">Manage</span>
<div class="a" style="left:1435px;top:489px;width:48px;height:48px;background:#e0e7ff;border-radius:8px;"></div>
<svg class="a" style="left:1447px;top:501px" width="24" height="24" viewBox="0 0 24 24" fill="none" stroke="#4136dd" stroke-width="2"><path d="M4 4v16h16" stroke-linecap="round" stroke-linejoin="round"/><path d="M9 8h6M5 12h13M7 16h10" stroke-opacity="0.3"/><path d="M8.8 8h6.4M3.8 12h14.4M6.8 16h10.4" stroke-dasharray="2.4 1.6"/></svg>
<div class="a" style="left:122px;top:620px;width:330px;height:134px;background:#fff;border:1px solid #cbd5e1;border-radius:8px;"></div>
<span class="a t" style="top:649px;font-size:17.8px;line-height:20px;color:#1e293b;letter-spacing:0.745px;-webkit-text-stroke:0.3px #1e293b;left:147.11px;">Conversation</span>
<span class="a t" style="top:679px;font-size:24px;line-height:27px;font-weight:700;color:#0f172a;left:147.90px;transform-origin:0 50%;transform:scaleX(1.1139931353909802);">35</span>
<span class="a t" style="top:684px;font-size:21.5px;line-height:24px;color:#5d6b80;left:184.48px;">/</span>
<span class="a t" style="top:685px;font-size:17.6px;line-height:20px;color:#334155;letter-spacing:0.930px;-webkit-text-stroke:0.55px #334155;left:199.28px;">Unlimited</span>
<span class="a t" style="top:711px;font-size:14.2px;line-height:16px;color:#0284c7;letter-spacing:0.303px;-webkit-text-stroke:0.25px #0284c7;left:355.70px;">Open Chat</span>
<div class="a" style="left:379px;top:645px;width:48px;height:48px;background:#d3edfd;border-radius:8px;"></div>
<svg class="a" style="left:391.0px;top:657.0px;" width="24" height="24" viewBox="0 0 24 24" fill="none" stroke="#0284c7" stroke-width="2" stroke-linecap="round" stroke-linejoin="round"><path d="M8 12h.01M12 12h.01M16 12h.01M21 12c0 4.418-4.03 8-9 8a9.863 9.863 0 01-4.255-.949L3 20l1.395-3.72C3.512 15.042 3 13.574 3 12c0-4.418 4.03-8 9-8s9 3.582 9 8z"/></svg>
<div class="a" style="left:474px;top:620px;width:330px;height:134px;background:#fff;border:1px solid #cbd5e1;border-radius:8px;"></div>
<span class="a t" style="top:649px;font-size:17.8px;line-height:20px;color:#1e293b;letter-spacing:0.596px;-webkit-text-stroke:0.3px #1e293b;left:499.80px;">AI Assistant</span>
<svg class="a" style="left:499.7px;top:683px" width="15" height="19" viewBox="0 0 15 19"><path fill-rule="evenodd" fill="#0f172a" d="M7.45 0C12 0 14.9 3.7 14.9 9.25S12 18.5 7.45 18.5 0 14.8 0 9.25 2.9 0 7.45 0ZM7.45 3.2C5.1 3.2 3.75 5.5 3.75 9.25s1.35 6.05 3.7 6.05 3.7-2.3 3.7-6.05S9.8 3.2 7.45 3.2Z"/></svg>
<span class="a t" style="top:684px;font-size:21.5px;line-height:24px;color:#5d6b80;left:523.22px;">/</span>
<span class="a t" style="top:685px;font-size:18px;line-height:20px;color:#334155;-webkit-text-stroke:0.4px #334155;left:537.60px;transform-origin:0 50%;transform:scaleX(0.9346647017942722);">10</span>
<span class="a t" style="top:711px;font-size:14.2px;line-height:16px;color:#475569;letter-spacing:0.015px;left:499.60px;">AI Replies</span>
<span class="a t" style="top:711px;font-size:14.2px;line-height:16px;color:#4f46e5;letter-spacing:0.473px;-webkit-text-stroke:0.25px #4f46e5;left:725.12px;">Manage</span>
<div class="a" style="left:731px;top:645px;width:48px;height:48px;background:#e0e7ff;border-radius:8px;"></div>
<svg class="a" style="left:743.0px;top:657.0px;" width="24" height="24" viewBox="0 0 24 24" fill="none" stroke="#4f46e5" stroke-width="2" stroke-linecap="round" stroke-linejoin="round"><path d="M9.663 17h4.673M12 3v1m6.364 1.636l-.707.707M21 12h-1M4 12H3m3.343-5.657l-.707-.707m2.828 9.9a5 5 0 117.072 0l-.548.547A3.374 3.374 0 0014 18.469V19a2 2 0 11-4 0v-.531c0-.895-.356-1.754-.988-2.386l-.548-.547z"/></svg>
<div class="a" style="left:98px;top:800px;width:949px;height:363px;background:#fff;border:1px solid #cbd5e1;border-radius:8px;"></div>
<div class="a" style="left:99px;top:857px;width:947px;height:1px;background:#cbd5e1;"></div>
<span class="a t" style="top:819px;font-size:17.5px;line-height:20px;color:#1e293b;letter-spacing:0.966px;-webkit-text-stroke:0.62px #1e293b;left:123.98px;">Audience Growth</span>
<div class="a" style="left:880px;top:813px;width:142px;height:32px;background:#f1f5f9;border-radius:8px;"></div>
<div class="a" style="left:884px;top:817px;width:59px;height:24px;background:#fff;border-radius:6px;box-shadow:0 1px 2px rgba(15,23,42,0.08);"></div>
<span class="a t" style="top:821px;font-size:13px;line-height:15px;color:#334155;letter-spacing:0.210px;-webkit-text-stroke:0.2px #334155;left:895.67px;">Mixed</span>
<span class="a t" style="top:821px;font-size:13px;line-height:15px;color:#334155;letter-spacing:-0.011px;-webkit-text-stroke:0.2px #334155;left:959.22px;">Stacked</span>
<svg class="a" style="left:0;top:0" width="1558" height="1215" viewBox="0 0 1558 1215"><line x1="166.6" y1="1080.3" x2="977.8" y2="1080.3" stroke="#000" stroke-opacity="0.06" stroke-width="1"/><line x1="166.6" y1="1049.3" x2="977.8" y2="1049.3" stroke="#000" stroke-opacity="0.06" stroke-width="1"/><line x1="166.6" y1="1018.3" x2="977.8" y2="1018.3" stroke="#000" stroke-opacity="0.06" stroke-width="1"/><line x1="166.6" y1="987.3" x2="977.8" y2="987.3" stroke="#000" stroke-opacity="0.06" stroke-width="1"/><line x1="166.6" y1="956.3" x2="977.8" y2="956.3" stroke="#000" stroke-opacity="0.06" stroke-width="1"/><line x1="166.6" y1="925.3" x2="977.8" y2="925.3" stroke="#000" stroke-opacity="0.06" stroke-width="1"/><line x1="174.6" y1="925.3" x2="174.6" y2="1080.3" stroke="#000" stroke-opacity="0.09" stroke-width="1"/><line x1="969.8" y1="925.3" x2="969.8" y2="1080.3" stroke="#000" stroke-opacity="0.09" stroke-width="1"/><line x1="174.6" y1="1080.3" x2="969.8" y2="1080.3" stroke="#000" stroke-opacity="0.09" stroke-width="1"/><rect x="911" y="925.0" width="23.9" height="154.2" rx="4" fill="#10b981" fill-opacity="0.66"/><path d="M870.4 1080.3 L936.7 1080.3" stroke="#f59e0b" stroke-width="3" fill="none"/><circle cx="936.7" cy="1080.3" r="5" fill="#f59e0b" stroke="#fff" stroke-width="2"/><path d="M207.7 1080.3 L870.4 1080.3 C908.4 1035.8, 910.2 987.3, 936.7 925.3" stroke="#4f46e5" stroke-width="3" fill="none" stroke-linejoin="round"/><circle cx="207.7" cy="1080.3" r="5" fill="#4f46e5" stroke="#fff" stroke-width="2"/><circle cx="274.0" cy="1080.3" r="5" fill="#4f46e5" stroke="#fff" stroke-width="2"/><circle cx="340.3" cy="1080.3" r="5" fill="#4f46e5" stroke="#fff" stroke-width="2"/><circle cx="406.5" cy="1080.3" r="5" fill="#4f46e5" stroke="#fff" stroke-width="2"/><circle cx="472.8" cy="1080.3" r="5" fill="#4f46e5" stroke="#fff" stroke-width="2"/><circle cx="539.1" cy="1080.3" r="5" fill="#4f46e5" stroke="#fff" stroke-width="2"/><circle cx="605.3" cy="1080.3" r="5" fill="#4f46e5" stroke="#fff" stroke-width="2"/><circle cx="671.6" cy="1080.3" r="5" fill="#4f46e5" stroke="#fff" stroke-width="2"/><circle cx="737.9" cy="1080.3" r="5" fill="#4f46e5" stroke="#fff" stroke-width="2"/><circle cx="804.1" cy="1080.3" r="5" fill="#4f46e5" stroke="#fff" stroke-width="2"/><circle cx="870.4" cy="1080.3" r="5" fill="#4f46e5" stroke="#fff" stroke-width="2"/><circle cx="936.7" cy="925.3" r="5" fill="#4f46e5" stroke="#fff" stroke-width="2"/><rect x="341.3" y="906.4" width="18.6" height="4" fill="#4f46e5"/><rect x="470.6" y="906.4" width="18.6" height="4" fill="#f59e0b"/><rect x="583.3" y="900.3" width="15.2" height="15.2" rx="4.5" fill="#10b981" fill-opacity="0.66"/><rect x="710.3" y="900.3" width="15.2" height="15.2" rx="4.5" fill="#ef4444" fill-opacity="0.66"/></svg>
<span class="a t" style="top:899px;font-size:14px;line-height:16px;color:#3b495e;left:365.00px;">Total Contacts</span>
<span class="a t" style="top:899px;font-size:14px;line-height:16px;color:#3b495e;left:493.93px;">Total Leads</span>
<span class="a t" style="top:899px;font-size:14px;line-height:16px;color:#3b495e;left:604.42px;">New Contacts</span>
<span class="a t" style="top:899px;font-size:14px;line-height:16px;color:#3b495e;left:731.00px;">New Leads</span>
<span class="a t" style="top:918px;font-size:11px;line-height:12px;color:#64748b;left:148.97px;">1.0</span>
<span class="a t" style="top:918px;font-size:11px;line-height:12px;color:#64748b;left:980.12px;">1.0</span>
<span class="a t" style="top:950px;font-size:11px;line-height:12px;color:#64748b;left:149.03px;">0.8</span>
<span class="a t" style="top:950px;font-size:11px;line-height:12px;color:#64748b;left:980.04px;">0.8</span>
<span class="a t" style="top:981px;font-size:11px;line-height:12px;color:#64748b;left:149.04px;">0.6</span>
<span class="a t" style="top:981px;font-size:11px;line-height:12px;color:#64748b;left:980.04px;">0.6</span>
<span class="a t" style="top:1012px;font-size:11px;line-height:12px;color:#64748b;left:148.26px;">0.4</span>
<span class="a t" style="top:1012px;font-size:11px;line-height:12px;color:#64748b;left:980.04px;">0.4</span>
<span class="a t" style="top:1043px;font-size:11px;line-height:12px;color:#64748b;left:149.17px;">0.2</span>
<span class="a t" style="top:1043px;font-size:11px;line-height:12px;color:#64748b;left:980.04px;">0.2</span>
<span class="a t" style="top:1074px;font-size:11px;line-height:12px;color:#64748b;left:158.15px;">0</span>
<span class="a t" style="top:1074px;font-size:11px;line-height:12px;color:#64748b;left:980.04px;">0</span>
<span class="a t" style="right:1350.4px;top:1089.2px;font-size:11px;line-height:13px;color:#64748b;transform-origin:100% 50%;transform:rotate(-45deg)">Dec 2024</span>
<span class="a t" style="right:1284.1px;top:1089.2px;font-size:11px;line-height:13px;color:#64748b;transform-origin:100% 50%;transform:rotate(-45deg)">Jan 2025</span>
<span class="a t" style="right:1217.8px;top:1089.2px;font-size:11px;line-height:13px;color:#64748b;transform-origin:100% 50%;transform:rotate(-45deg)">Feb 2025</span>
<span class="a t" style="right:1151.6px;top:1089.2px;font-size:11px;line-height:13px;color:#64748b;transform-origin:100% 50%;transform:rotate(-45deg)">Mar 2025</span>
<span class="a t" style="right:1085.3px;top:1089.2px;font-size:11px;line-height:13px;color:#64748b;transform-origin:100% 50%;transform:rotate(-45deg)">Apr 2025</span>
<span class="a t" style="right:1019.0px;top:1089.2px;font-size:11px;line-height:13px;color:#64748b;transform-origin:100% 50%;transform:rotate(-45deg)">May 2025</span>
<span class="a t" style="right:952.8px;top:1089.2px;font-size:11px;line-height:13px;color:#64748b;transform-origin:100% 50%;transform:rotate(-45deg)">Jun 2025</span>
<span class="a t" style="right:886.5px;top:1089.2px;font-size:11px;line-height:13px;color:#64748b;transform-origin:100% 50%;transform:rotate(-45deg)">Jul 2025</span>
<span class="a t" style="right:820.2px;top:1089.2px;font-size:11px;line-height:13px;color:#64748b;transform-origin:100% 50%;transform:rotate(-45deg)">Aug 2025</span>
<span class="a t" style="right:754.0px;top:1089.2px;font-size:11px;line-height:13px;color:#64748b;transform-origin:100% 50%;transform:rotate(-45deg)">Sep 2025</span>
<span class="a t" style="right:687.7px;top:1089.2px;font-size:11px;line-height:13px;color:#64748b;transform-origin:100% 50%;transform:rotate(-45deg)">Oct 2025</span>
<span class="a t" style="right:621.4px;top:1089.2px;font-size:11px;line-height:13px;color:#64748b;transform-origin:100% 50%;transform:rotate(-45deg)">Nov 2025</span>
<span class="a t" style="left:134.2px;top:1002.8px;font-size:12px;line-height:14px;font-weight:700;color:#56657c;transform:translate(-50%,-50%) rotate(-90deg)">Total Audience (Cumulative)</span>
<span class="a t" style="left:1010px;top:1002.8px;font-size:12px;line-height:14px;font-weight:700;color:#56657c;transform:translate(-50%,-50%) rotate(90deg)">Monthly New Additions</span>
<div class="a" style="left:1069px;top:800px;width:463px;height:331px;background:#fff;border:1px solid #cbd5e1;border-radius:8px;"></div>
<div class="a" style="left:1070px;top:853px;width:461px;height:1px;background:#cbd5e1;"></div>
<span class="a t" style="top:817px;font-size:17.5px;line-height:20px;color:#1e293b;letter-spacing:0.999px;-webkit-text-stroke:0.62px #1e293b;left:1093.79px;">Contact Sources</span>
<svg class="a" style="left:1200px;top:870px" width="200" height="210" viewBox="1200 870 200 210"><circle cx="1300.5" cy="973.7" r="93.3" fill="#3b82f6"/><rect x="1299" y="879" width="3" height="94.7" fill="#fff"/></svg>
<div class="a" style="left:1094px;top:1090px;width:12px;height:12px;background:#3b82f6;border-radius:50%;"></div>
<span class="a t" style="top:1088px;font-size:14.2px;line-height:16px;color:#475569;letter-spacing:0.379px;left:1114.00px;">Direct</span>
<span class="a t" style="top:1088px;font-size:14.2px;line-height:16px;color:#0f172a;letter-spacing:0.238px;-webkit-text-stroke:0.3px #0f172a;left:1456.56px;">100.0%</span>
<div class="a" style="left:98px;top:1185px;width:718px;height:60px;background:#fff;border:1px solid #cbd5e1;border-radius:8px;"></div>
<span class="a t" style="top:1202px;font-size:17.5px;line-height:20px;color:#1e293b;letter-spacing:0.915px;-webkit-text-stroke:0.62px #1e293b;left:123.96px;">Weekly Message Volume</span>
<div class="a" style="left:838px;top:1185px;width:694px;height:60px;background:#fff;border:1px solid #cbd5e1;border-radius:8px;"></div>
<span class="a t" style="top:1202px;font-size:17.5px;line-height:20px;color:#1e293b;letter-spacing:1.990px;-webkit-text-stroke:0.62px #1e293b;left:862.79px;">Campaign Statistic</span>
<div class="a" style="left:1404px;top:1197.5px;width:103px;height:32px;background:#f1f5f9;border-radius:8px;"></div>
<div class="a" style="left:1460px;top:1201.5px;width:43px;height:23px;background:#fff;border-radius:6px;box-shadow:0 1px 2px rgba(15,23,42,0.08);"></div>
<span class="a t" style="top:1206px;font-size:13px;line-height:15px;color:#334155;letter-spacing:0.138px;-webkit-text-stroke:0.2px #334155;left:1418.14px;">Line</span>
<span class="a t" style="top:1206px;font-size:13px;line-height:15px;color:#334155;letter-spacing:-0.300px;-webkit-text-stroke:0.2px #334155;left:1471.06px;">Bar</span>
<svg class="a" style="left:0;top:1185px" width="30" height="30" viewBox="0 0 30 30"><path d="M0 4 C0.3 14 0.8 19 2.3 23 C3.6 26 6 28.4 9.4 30 L0 30 Z" fill="#0a0a0a"/></svg>
<svg class="a" style="left:1546px;top:1203px" width="12" height="12" viewBox="0 0 12 12"><path d="M12 4.5 L12 12 L4.5 12 C8 10.5 10.5 8 12 4.5 Z" fill="#0a0a0a"/></svg>
</div></body></html>
